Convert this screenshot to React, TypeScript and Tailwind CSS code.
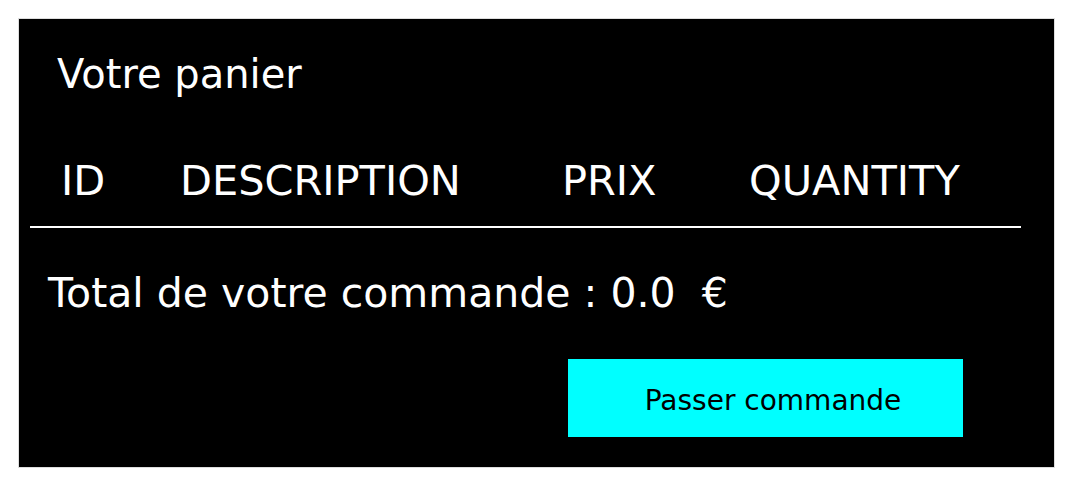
export default function App() {
  const headers = [
    { label: "ID", w: "w-[119px]" },
    { label: "DESCRIPTION", w: "w-[382px]" },
    { label: "PRIX", w: "w-[187px]" },
    { label: "QUANTITY", w: "w-auto" },
  ];

  return (
    <div className="bg-white p-[18px] min-h-screen" style={{ fontFamily: '"DejaVu Sans", Verdana, sans-serif' }}>
      <div className="border border-[#dddddd] bg-black h-[450px] text-white">
        {/* Title */}
        <div className="pl-[38px] pt-[32px] text-[40px] leading-[46px]">Votre panier</div>

        {/* Table header */}
        <div className="flex pl-[42px] mt-[61px] text-[41.5px] leading-[46px]">
          {headers.map((h) => (
            <div key={h.label} className={h.w}>
              {h.label}
            </div>
          ))}
        </div>
        <div className="mx-[11px] w-[991px] border-t-2 border-white mt-[22px]" />

        {/* Total */}
        <div className="pl-[29px] mt-[42px] text-[41px] leading-[46px]">
          Total de votre commande : 0.0&nbsp; €
        </div>

        {/* Button */}
        <div className="pl-[549px] mt-[43px]">
          <button className="w-[395px] h-[78px] bg-[#00ffff] text-black text-[28px] pl-[15px] pt-[6px]">
            Passer commande
          </button>
        </div>
      </div>
    </div>
  );
}
